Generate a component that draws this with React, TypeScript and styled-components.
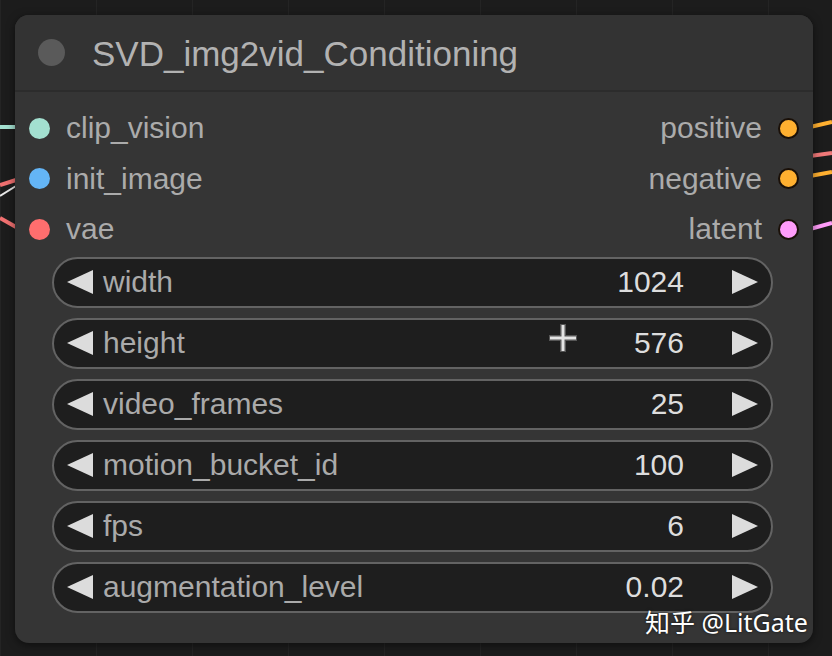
import styled, { createGlobalStyle } from 'styled-components'

const GlobalStyle = createGlobalStyle`
  html, body {
    margin: 0;
    padding: 0;
    background: #1b1b1b;
  }
  body {
    font-family: 'Liberation Sans', Arial, sans-serif;
  }
`

const Canvas = styled.div`
  position: relative;
  width: 832px;
  height: 656px;
  box-sizing: border-box;
  overflow: hidden;
  padding: 15px 0 0 15px;
  background-color: #1c1c1c;
  background-image: linear-gradient(90deg, rgba(255, 255, 255, 0.035) 1px, transparent 1px);
  background-size: 96px 96px;
`

// wires behind the node
const Wires = styled.svg`
  position: absolute;
  inset: 0;
  z-index: 0;
`

const Node = styled.div`
  position: relative;
  z-index: 1;
  width: 798px;
  height: 628px;
  box-sizing: border-box;
  display: flex;
  flex-direction: column;
  background: #353535;
  border-radius: 14px;
  box-shadow: 0 2px 8px rgba(0, 0, 0, 0.5);
`

const Header = styled.div`
  height: 77px;
  box-sizing: border-box;
  display: flex;
  align-items: center;
  gap: 27px;
  padding-left: 23px;
  background: #333333;
  border-radius: 14px 14px 0 0;
  border-bottom: 2px solid #2c2c2c;
`

const TitleDot = styled.span`
  width: 27px;
  height: 27px;
  border-radius: 50%;
  background: #5a5a5a;
`

const Title = styled.span`
  font-size: 35px;
  color: #b2b2b2;
  padding-top: 2px;
`

const Slots = styled.div`
  display: flex;
  flex-direction: column;
  padding: 11px 14px 0 14px;
`

const SlotRow = styled.div`
  height: 50.5px;
  display: flex;
  align-items: center;
  justify-content: space-between;
`

const Slot = styled.div`
  display: flex;
  align-items: center;
  gap: 16px;
  font-size: 30px;
  color: #ababab;
`

const Dot = styled.span<{ $color: string; $outlined?: boolean }>`
  width: 21px;
  height: 21px;
  box-sizing: border-box;
  border-radius: 50%;
  background: ${(p) => p.$color};
  border: ${(p) => (p.$outlined ? '2px solid #1a1008' : 'none')};
`

const Widgets = styled.div`
  display: flex;
  flex-direction: column;
  gap: 10px;
  margin-top: 2px;
  padding: 0 40px 0 37px;
`

const Widget = styled.div`
  position: relative;
  height: 51px;
  box-sizing: border-box;
  display: flex;
  align-items: center;
  padding: 0 13px;
  background: #1e1e1e;
  border: 2px solid #636363;
  border-radius: 26px;
  font-size: 30px;
`

const Arrow = styled.span<{ $dir: 'left' | 'right' }>`
  width: 0;
  height: 0;
  border-top: 12px solid transparent;
  border-bottom: 12px solid transparent;
  ${(p) =>
    p.$dir === 'left'
      ? 'border-right: 26px solid #dcdcdc;'
      : 'border-left: 26px solid #dcdcdc; margin-left: 48px;'}
`

const Label = styled.span`
  margin-left: 10px;
  color: #aaaaaa;
`

const Value = styled.span`
  margin-left: auto;
  color: #dddddd;
`

// mouse cursor sitting over the height widget
const Cursor = styled.svg`
  position: absolute;
  left: 546px;
  top: 321px;
  z-index: 2;
`

const Watermark = styled.div`
  position: absolute;
  left: 645px;
  top: 603px;
  z-index: 2;
  font-family: 'Noto Sans', 'Noto Sans CJK SC', sans-serif;
  font-size: 25px;
  color: #ffffff;
  text-shadow: 0 0 3px rgba(0, 0, 0, 0.7);
  white-space: nowrap;
`

const inputs = [
  { name: 'clip_vision', color: '#a3e0d0' },
  { name: 'init_image', color: '#64b5f6' },
  { name: 'vae', color: '#ff6e6e' },
]

const outputs = [
  { name: 'positive', color: '#ffb030' },
  { name: 'negative', color: '#ffb030' },
  { name: 'latent', color: '#ff9cf9' },
]

const widgets = [
  { name: 'width', value: '1024' },
  { name: 'height', value: '576' },
  { name: 'video_frames', value: '25' },
  { name: 'motion_bucket_id', value: '100' },
  { name: 'fps', value: '6' },
  { name: 'augmentation_level', value: '0.02' },
]

function App() {
  return (
    <>
      <GlobalStyle />
      <Canvas>
        <Wires width="832" height="656">
          <path d="M0 127 L18 127" stroke="#a3e0d0" strokeWidth="4" />
          <path d="M0 196 L16 186" stroke="#e8e8e8" strokeWidth="2" />
          <path d="M0 185 L16 180" stroke="#f07070" strokeWidth="4" />
          <path d="M0 218 L16 227" stroke="#f07070" strokeWidth="4" />
          <path d="M810 127 L832 122" stroke="#ffb030" strokeWidth="4" />
          <path d="M810 156 L832 153" stroke="#f07878" strokeWidth="4" />
          <path d="M810 176 L832 172" stroke="#ffb030" strokeWidth="4" />
          <path d="M810 229 L832 223" stroke="#ff9cf9" strokeWidth="4" />
        </Wires>
        <Node>
          <Header>
            <TitleDot />
            <Title>SVD_img2vid_Conditioning</Title>
          </Header>
          <Slots>
            {inputs.map((input, i) => (
              <SlotRow key={input.name}>
                <Slot>
                  <Dot $color={input.color} />
                  {input.name}
                </Slot>
                <Slot>
                  {outputs[i].name}
                  <Dot $color={outputs[i].color} $outlined />
                </Slot>
              </SlotRow>
            ))}
          </Slots>
          <Widgets>
            {widgets.map((w) => (
              <Widget key={w.name}>
                <Arrow $dir="left" />
                <Label>{w.name}</Label>
                <Value>{w.value}</Value>
                <Arrow $dir="right" />
              </Widget>
            ))}
          </Widgets>
        </Node>
        <Cursor width="34" height="34" viewBox="0 0 34 34">
          <path d="M17 3 V31 M3 17 H31" stroke="#555" strokeWidth="6" />
          <path d="M17 4 V30 M4 17 H30" stroke="#e4e4e4" strokeWidth="3" />
        </Cursor>
        <Watermark>知乎 @LitGate</Watermark>
      </Canvas>
    </>
  )
}

export default App
